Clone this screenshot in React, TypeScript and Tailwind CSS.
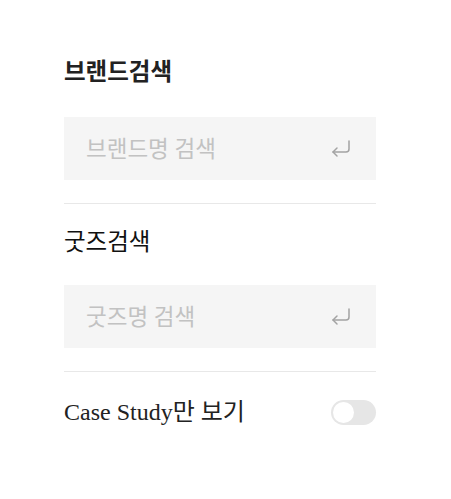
import React from "react";

const Enter = () => (
  <svg width="22" height="20" viewBox="0 0 22 20" fill="none" stroke="#a3a3a3" strokeWidth="1.5" strokeLinecap="round" strokeLinejoin="round">
    <path d="M19 2v8a3 3 0 0 1-3 3H3" />
    <path d="M7 9l-4 4 4 4" />
  </svg>
);

const SearchBox = ({ placeholder }: { placeholder: string }) => (
  <div className="flex h-[63px] items-center justify-between bg-[#f5f5f5] pl-[22px] pr-[24px]">
    <span className="pt-[3px] text-[22.5px] leading-none text-[#c2c2c2]">{placeholder}</span>
    <Enter />
  </div>
);

export default function App() {
  const font = { fontFamily: '"Liberation Serif", "Noto Sans CJK KR", serif' };
  return (
    <div className="min-h-[499px] w-[451px] bg-white pt-[57px]" style={font}>
      <div className="ml-[64px] w-[312px]">
        <h2 className="text-[23.5px] font-bold leading-[30px] text-[#222]">브랜드검색</h2>
        <div className="mt-[30px]">
          <SearchBox placeholder="브랜드명 검색" />
        </div>
        <div className="mt-[23px] h-px bg-[#e8e8e8]" />
        <h2 className="mt-[23px] text-[23.5px] font-normal leading-[30px] text-[#111]">굿즈검색</h2>
        <div className="mt-[28px]">
          <SearchBox placeholder="굿즈명 검색" />
        </div>
        <div className="mt-[23px] h-px bg-[#e8e8e8]" />
        <div className="mt-[26px] flex items-center justify-between">
          <span className="text-[24px] leading-[28px] text-[#222]">Case Study만 보기</span>
          <div className="flex h-[25px] w-[45px] items-center rounded-full bg-[#e6e6e6] px-[2px]">
            <div className="h-[21px] w-[21px] rounded-full bg-white" />
          </div>
        </div>
      </div>
    </div>
  );
}
